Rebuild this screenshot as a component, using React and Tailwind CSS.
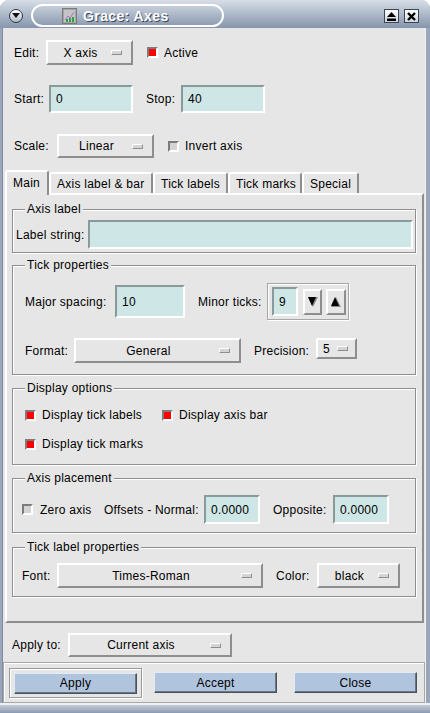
import React from "react";

const raised = "border-2 border-t-white border-l-white border-r-[#8e8e8e] border-b-[#8e8e8e]";
const sunken = "border-2 border-t-[#8a9a9a] border-l-[#8a9a9a] border-r-white border-b-white bg-[#cfe6e6]";

function OptionMenu({ label, className, textClass = "flex-1 text-center pl-[2px]", indClass = "mr-[9px]" }) {
  return (
    <div className={`flex items-center bg-[#e6e6e6] ${raised} ${className}`}>
      <span className={textClass}>{label}</span>
      <span className={`w-[11px] h-[5px] shrink-0 border border-t-white border-l-white border-r-[#8e8e8e] border-b-[#8e8e8e] bg-[#d4d4d4] ${indClass}`} />
    </div>
  );
}

function Field({ value, className }) {
  return <div className={`flex items-center pl-[5px] ${sunken} ${className}`}>{value}</div>;
}

function Check({ on }) {
  return (
    <span
      className={`inline-block w-[11px] h-[11px] shrink-0 border-2 border-t-[#7c7c7c] border-l-[#7c7c7c] border-r-white border-b-white ${
        on ? "bg-[#ff0000]" : "bg-[#d4d4d4]"
      }`}
    />
  );
}

function Btn({ label }) {
  return (
    <div className="w-[123px] h-[21px] flex items-center justify-center bg-[#b0c4de] border border-t-[#e2eaf4] border-l-[#e2eaf4] border-r-[#4a525c] border-b-[#4a525c] shadow-[inset_-1px_-1px_0_#6a7686]">
      {label}
    </div>
  );
}

function Tab({ label, w, selected }) {
  return (
    <div
      className={`${w} flex items-center pl-[6px] border-t-2 border-l-2 border-r-2 border-t-white border-l-white border-r-[#8e8e8e] rounded-t-[3px] bg-[#e6e6e6] ${
        selected ? "h-[25px] -mb-[2px] pb-[2px] relative z-10" : "h-[21px]"
      }`}
    >
      {label}
    </div>
  );
}

function Frame({ title, className, children }) {
  return (
    <div className={`relative ml-[5px] w-[404px] border border-[#8e8e8e] shadow-[inset_1px_1px_0_#fff,1px_1px_0_#fff] ${className}`}>
      <span className="absolute -top-[7px] left-[12px] px-[2px] bg-[#e6e6e6] leading-[13px]">{title}</span>
      {children}
    </div>
  );
}

function SpinArrow({ down }) {
  return (
    <svg width="12" height="12" viewBox="0 0 12 12">
      {down ? (
        <>
          <polygon points="1,1 11,1 6,11" fill="#8a8a8a" />
          <polygon points="1,1 9,1 5,10" fill="#000" />
        </>
      ) : (
        <>
          <polygon points="6,1 11,11 1,11" fill="#8a8a8a" />
          <polygon points="5,1 9,10 1,10" fill="#000" />
        </>
      )}
    </svg>
  );
}

function TitleBar() {
  return (
    <div className="h-[28px] shrink-0 flex items-start bg-linear-to-b from-[#d8dee7] to-[#8696ac]">
      <div className="ml-[9px] mt-[9px] w-[14px] h-[14px] rounded-full border border-[#2c3848] bg-linear-to-b from-white to-[#aeb8c6] flex items-center justify-center">
        <svg width="8" height="6" viewBox="0 0 8 6">
          <polygon points="0,0 8,0 4,5" fill="#111" />
        </svg>
      </div>
      <div className="ml-[8px] mt-[4px] w-[193px] h-[23px] rounded-full border-2 border-white flex items-center pl-[29px]">
        <svg width="15" height="16" viewBox="0 0 15 16">
          <rect x="0.5" y="0.5" width="14" height="15" fill="#a6a6a6" stroke="#7a7a7a" />
          <rect x="2" y="2" width="11" height="12" fill="#c4c4c4" />
          <polyline points="3,12 6,8 8,10 12,4" fill="none" stroke="#b070d0" strokeWidth="1" />
          <rect x="4" y="11" width="2" height="3" fill="#30a040" />
          <rect x="7" y="10" width="2" height="4" fill="#30a040" />
          <rect x="10" y="9" width="2" height="5" fill="#30a040" />
        </svg>
        <span className="ml-[6px] text-[14px] tracking-[0.4px] font-bold text-white [text-shadow:1px_1px_0_#3c4858]">Grace: Axes</span>
      </div>
      <div className="ml-auto mt-[9px] flex gap-[5px] mr-[11px]">
        <div className="w-[15px] h-[14px] bg-linear-to-b from-white to-[#d0d6de] border border-[#3a4656] flex items-center justify-center">
          <svg width="9" height="9" viewBox="0 0 9 9">
            <polygon points="4.5,0 9,5 0,5" fill="#000" />
            <rect x="0" y="6.5" width="9" height="2.5" fill="#000" />
          </svg>
        </div>
        <div className="w-[15px] h-[14px] bg-linear-to-b from-white to-[#d0d6de] border border-[#3a4656] flex items-center justify-center">
          <svg width="9" height="9" viewBox="0 0 9 9">
            <path d="M1 1 L8 8 M8 1 L1 8" stroke="#000" strokeWidth="2.4" />
          </svg>
        </div>
      </div>
    </div>
  );
}

export default function App() {
  return (
    <div className="w-[430px] h-[713px] flex flex-col bg-[#a2aec0] rounded-t-[9px] overflow-hidden font-['Liberation_Sans',Arial,sans-serif] text-[12px] tracking-[0.25px] text-black leading-none">
      <TitleBar />
      <div className="flex flex-1">
        <div className="w-[3px] bg-[#9aa7ba] border-r border-r-[#7f8da2]" />
        <div className="w-[422px] bg-[#e6e6e6] flex flex-col">
          {/* Edit row */}
          <div className="mt-[12px] h-[25px] flex items-center pl-[11px]">
            <span className="w-[32px]">Edit:</span>
            <OptionMenu label="X axis" className="w-[87px] h-[25px]" />
            <span className="ml-[14px] flex">
              <Check on />
            </span>
            <span className="ml-[6px]">Active</span>
          </div>
          {/* Start/Stop */}
          <div className="mt-[20px] h-[28px] flex items-center pl-[11px]">
            <span className="w-[35px]">Start:</span>
            <Field value="0" className="w-[84px] h-[28px]" />
            <span className="ml-[13px] w-[35px]">Stop:</span>
            <Field value="40" className="w-[84px] h-[28px]" />
          </div>
          {/* Scale */}
          <div className="mt-[21px] h-[24px] flex items-center pl-[11px]">
            <span className="w-[43px]">Scale:</span>
            <OptionMenu label="Linear" className="w-[97px] h-[24px]" />
            <span className="ml-[14px] flex">
              <Check />
            </span>
            <span className="ml-[6px]">Invert axis</span>
          </div>
          {/* Tabs */}
          <div className="mt-[12px] h-[23px] flex items-end ml-[2px]">
            <Tab label="Main" w="w-[44px]" selected />
            <Tab label="Axis label & bar" w="w-[104px]" />
            <Tab label="Tick labels" w="w-[75px]" />
            <Tab label="Tick marks" w="w-[74px]" />
            <Tab label="Special" w="w-[57px]" />
          </div>
          {/* Panel */}
          <div className={`ml-[2px] w-[419px] h-[430px] flex flex-col ${raised}`}>
            <Frame title="Axis label" className="mt-[14px] pt-[10px] pb-[3px]">
              <div className="flex items-center pl-[3px] pr-[2px]">
                <span className="w-[72px]">Label string:</span>
                <Field value="" className="flex-1 h-[29px]" />
              </div>
            </Frame>
            <Frame title="Tick properties" className="mt-[12px] pt-[17px] pb-[11px]">
              <div className="h-[37px] flex items-center pl-[12px]">
                <span className="w-[90px]">Major spacing:</span>
                <Field value="10" className="w-[70px] h-[33px] items-start pt-[9px]" />
                <span className="ml-[13px] w-[69px]">Minor ticks:</span>
                <div className="w-[82px] h-[37px] flex items-center pl-[4px] border border-[#a6a6a6] shadow-[inset_1px_1px_0_#fff,1px_1px_0_#fff]">
                  <Field value="9" className="w-[26px] h-[29px]" />
                  <div className={`ml-[5px] w-[19px] h-[26px] flex items-center justify-center ${raised}`}>
                    <SpinArrow down />
                  </div>
                  <div className={`ml-[4px] w-[20px] h-[26px] flex items-center justify-center ${raised}`}>
                    <SpinArrow />
                  </div>
                </div>
              </div>
              <div className="mt-[18px] h-[25px] flex items-center pl-[12px]">
                <span className="w-[49px]">Format:</span>
                <OptionMenu label="General" className="w-[167px] h-[25px]" />
                <span className="ml-[13px] w-[62px]">Precision:</span>
                <OptionMenu
                  label="5"
                  className="w-[41px] h-[21px] self-start"
                  textClass="pl-[5px] flex-1"
                  indClass="mr-[7px]"
                />
              </div>
            </Frame>
            <Frame title="Display options" className="mt-[13px] pt-[18px] pb-[12px]">
              <div className="h-[16px] flex items-center pl-[12px]">
                <div className="w-[137px] flex items-center">
                  <Check on />
                  <span className="ml-[6px]">Display tick labels</span>
                </div>
                <Check on />
                <span className="ml-[6px]">Display axis bar</span>
              </div>
              <div className="mt-[13px] h-[16px] flex items-center pl-[12px]">
                <Check on />
                <span className="ml-[6px]">Display tick marks</span>
              </div>
            </Frame>
            <Frame title="Axis placement" className="mt-[13px] pt-[16px] pb-[8px]">
              <div className="h-[29px] flex items-center pl-[9px]">
                <div className="w-[82px] flex items-center">
                  <Check />
                  <span className="ml-[7px]">Zero axis</span>
                </div>
                <span className="w-[100px]">Offsets - Normal:</span>
                <Field value="0.0000" className="w-[56px] h-[29px]" />
                <span className="ml-[13px] w-[60px]">Opposite:</span>
                <Field value="0.0000" className="w-[56px] h-[29px]" />
              </div>
            </Frame>
            <Frame title="Tick label properties" className="mt-[14px] pt-[15px] pb-[8px]">
              <div className="h-[25px] flex items-center pl-[9px]">
                <span className="w-[35px]">Font:</span>
                <OptionMenu label="Times-Roman" className="w-[206px] h-[25px]" />
                <span className="ml-[13px] w-[41px]">Color:</span>
                <OptionMenu label="black" className="w-[83px] h-[25px]" />
              </div>
            </Frame>
          </div>
          {/* Apply to */}
          <div className="mt-[10px] h-[24px] flex items-center pl-[9px]">
            <span className="w-[56px]">Apply to:</span>
            <OptionMenu label="Current axis" className="w-[164px] h-[24px]" />
          </div>
          {/* Buttons */}
          <div className="mt-[5px] h-[41px] border border-[#a8a8a8] shadow-[inset_1px_1px_0_#fff] flex items-center pl-[5px]">
            <div className="p-[4px] pb-[3px] border border-[#9a9a9a] shadow-[inset_1px_1px_0_#fff,1px_1px_0_#fff]">
              <Btn label="Apply" />
            </div>
            <div className="ml-[12px]">
              <Btn label="Accept" />
            </div>
            <div className="ml-[17px]">
              <Btn label="Close" />
            </div>
          </div>
        </div>
        <div className="w-[5px] bg-[#9aa7ba] border-l border-l-[#f0f0f0]" />
      </div>
      <div className="h-[10px] shrink-0 bg-linear-to-b from-[#c4ccd8] to-[#8c9ab0] border-t-2 border-t-[#eef0f3]" />
    </div>
  );
}
